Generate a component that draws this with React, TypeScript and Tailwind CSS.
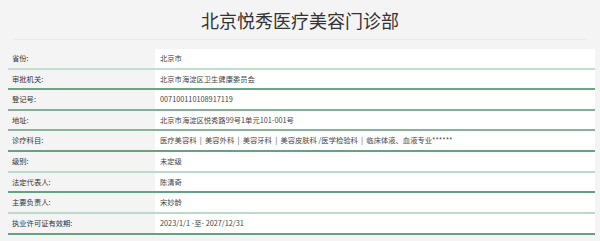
import React from "react";

const rows: { label: string; value: string; border: string; h: string }[] = [
  { label: "省份:", value: "北京市", border: "border-[#c3ddcf]", h: "h-[21px]" },
  { label: "审批机关:", value: "北京市海淀区卫生健康委员会", border: "border-[#6aa585]", h: "h-[20px]" },
  { label: "登记号:", value: "007100110108917119", border: "border-[#7fb196]", h: "h-[21px]" },
  { label: "地址:", value: "北京市海淀区悦秀路99号1单元101-001号", border: "border-[#86b49b]", h: "h-[20px]" },
  {
    label: "诊疗科目:",
    value:
      "医疗美容科\u00a0\u00a0|\u00a0\u00a0美容外科\u00a0\u00a0|\u00a0\u00a0美容牙科\u00a0\u00a0|\u00a0\u00a0美容皮肤科 /医学检验科\u00a0\u00a0|\u00a0\u00a0临床体液、血液专业******",
    border: "border-[#64a283]",
    h: "h-[21px]",
  },
  { label: "级别:", value: "未定级", border: "border-[#bcd9c9]", h: "h-[21px]" },
  { label: "法定代表人:", value: "陈清奇", border: "border-[#64a283]", h: "h-[20px]" },
  { label: "主要负责人:", value: "宋妙龄", border: "border-[#bcd9c9]", h: "h-[21px]" },
  { label: "执业许可证有效期:", value: "2023/1/1 -至- 2027/12/31", border: "border-[#64a283]", h: "h-[21px]" },
];

export default function App() {
  return (
    <div
      className="w-[600px] h-[241px] bg-[#f4f4f4] overflow-hidden"
      style={{ fontFamily: '"Noto Sans CJK SC", "Noto Sans", sans-serif' }}
    >
      <div className="h-[40px] mx-[14px] border-b border-[#e9e9e9] flex items-center justify-center">
        <h1 className="text-[18px] leading-none text-[#333] pt-[1px]">北京悦秀医疗美容门诊部</h1>
      </div>
      <div className="ml-[8px] mr-[5px] mt-[9px]">
        {rows.map((r) => (
          <div key={r.label} className={`flex ${r.h} border-b-2 ${r.border}`}>
            <div className="w-[147px] flex items-center pl-[4px] text-[7.3px] text-[#333]">{r.label}</div>
            <div className="flex-1 bg-white flex items-center pl-[5px] text-[7.3px] text-[#444] whitespace-nowrap">
              {r.value}
            </div>
          </div>
        ))}
      </div>
    </div>
  );
}
